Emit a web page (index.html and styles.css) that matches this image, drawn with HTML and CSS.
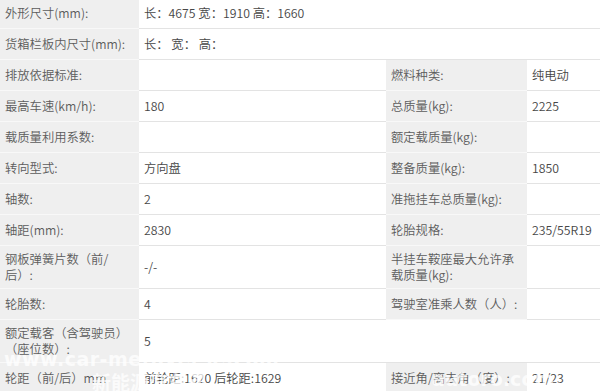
FILE: index.html
```html
<!DOCTYPE html>
<html lang="zh-CN">
<head>
<meta charset="utf-8">
<link rel="stylesheet" href="styles.css">
</head>
<body>
<div class="wrap">
<table class="spec">
  <colgroup><col class="c1"><col class="c2"><col class="c3"><col class="c4"></colgroup>
  <tr class="first"><td class="lb">外形尺寸(mm):</td><td class="vl" colspan="3">长：4675 宽：1910 高：1660</td></tr>
  <tr><td class="lb">货箱栏板内尺寸(mm):</td><td class="vl" colspan="3">长：&nbsp;宽：&nbsp;高：</td></tr>
  <tr><td class="lb">排放依据标准:</td><td class="vl"></td><td class="lb">燃料种类:</td><td class="vl">纯电动</td></tr>
  <tr><td class="lb">最高车速(km/h):</td><td class="vl">180</td><td class="lb">总质量(kg):</td><td class="vl">2225</td></tr>
  <tr><td class="lb">载质量利用系数:</td><td class="vl"></td><td class="lb">额定载质量(kg):</td><td class="vl"></td></tr>
  <tr><td class="lb">转向型式:</td><td class="vl">方向盘</td><td class="lb">整备质量(kg):</td><td class="vl">1850</td></tr>
  <tr><td class="lb">轴数:</td><td class="vl">2</td><td class="lb">准拖挂车总质量(kg):</td><td class="vl"></td></tr>
  <tr><td class="lb">轴距(mm):</td><td class="vl">2830</td><td class="lb">轮胎规格:</td><td class="vl">235/55R19</td></tr>
  <tr class="two"><td class="lb">钢板弹簧片数（前/后）:</td><td class="vl">-/-</td><td class="lb">半挂车鞍座最大允许承载质量(kg):</td><td class="vl"></td></tr>
  <tr><td class="lb">轮胎数:</td><td class="vl">4</td><td class="lb">驾驶室准乘人数（人）:</td><td class="vl"></td></tr>
  <tr class="two"><td class="lb">额定载客（含驾驶员）（座位数）:</td><td class="vl" colspan="3">5</td></tr>
  <tr><td class="lb">轮距（前/后）mm</td><td class="vl">前轮距:1620 后轮距:1629</td><td class="lb">接近角/离去角（度）:</td><td class="vl">21/23</td></tr>
</table>
<div class="mark m1">www.car-metaverse.com</div>
<div class="mark m2">新能源汽车网</div>
<div class="mark m3">autoro.com</div>
</div>
</body>
</html>
```
FILE: styles.css
```css
html, body {
  margin: 0;
  padding: 0;
  background: #fff;
}
.wrap {
  position: relative;
  width: 600px;
  height: 391px;
  overflow: hidden;
}
.spec {
  width: 600px;
  border-collapse: collapse;
  table-layout: fixed;
  margin-top: -2px;
  font-family: "Noto Sans CJK SC", "Noto Sans", sans-serif;
  font-size: 12.3px;
  font-weight: 350;
}
.c1 { width: 139px; }
.c2 { width: 247px; }
.c3 { width: 141px; }
.c4 { width: 73px; }
.spec td {
  padding: 6px 5px;
  line-height: 18px;
  vertical-align: middle;
  white-space: normal;
  word-break: break-all;
}
.lb {
  background: #efefef;
  color: #5c5c5c;
  border-bottom: 1px solid #f8f8f8;
}
.vl {
  background: #fff;
  color: #474747;
  border-bottom: 1px solid #e3e3e3;
}
.two td {
  line-height: 16px;
  padding-top: 5px;
  padding-bottom: 5px;
}
.mark {
  position: absolute;
  color: rgba(255, 255, 255, 0.75);
  font-family: "DejaVu Sans", "Noto Sans CJK SC", sans-serif;
  font-weight: bold;
  white-space: nowrap;
}
.m1 { left: 4px; top: 348px; font-size: 19px; letter-spacing: 0.5px; }
.m2 { left: 92px; top: 368px; font-size: 19px; font-family: "Noto Sans CJK SC", sans-serif; }
.m3 { left: 432px; top: 368px; font-size: 19px; }
```
